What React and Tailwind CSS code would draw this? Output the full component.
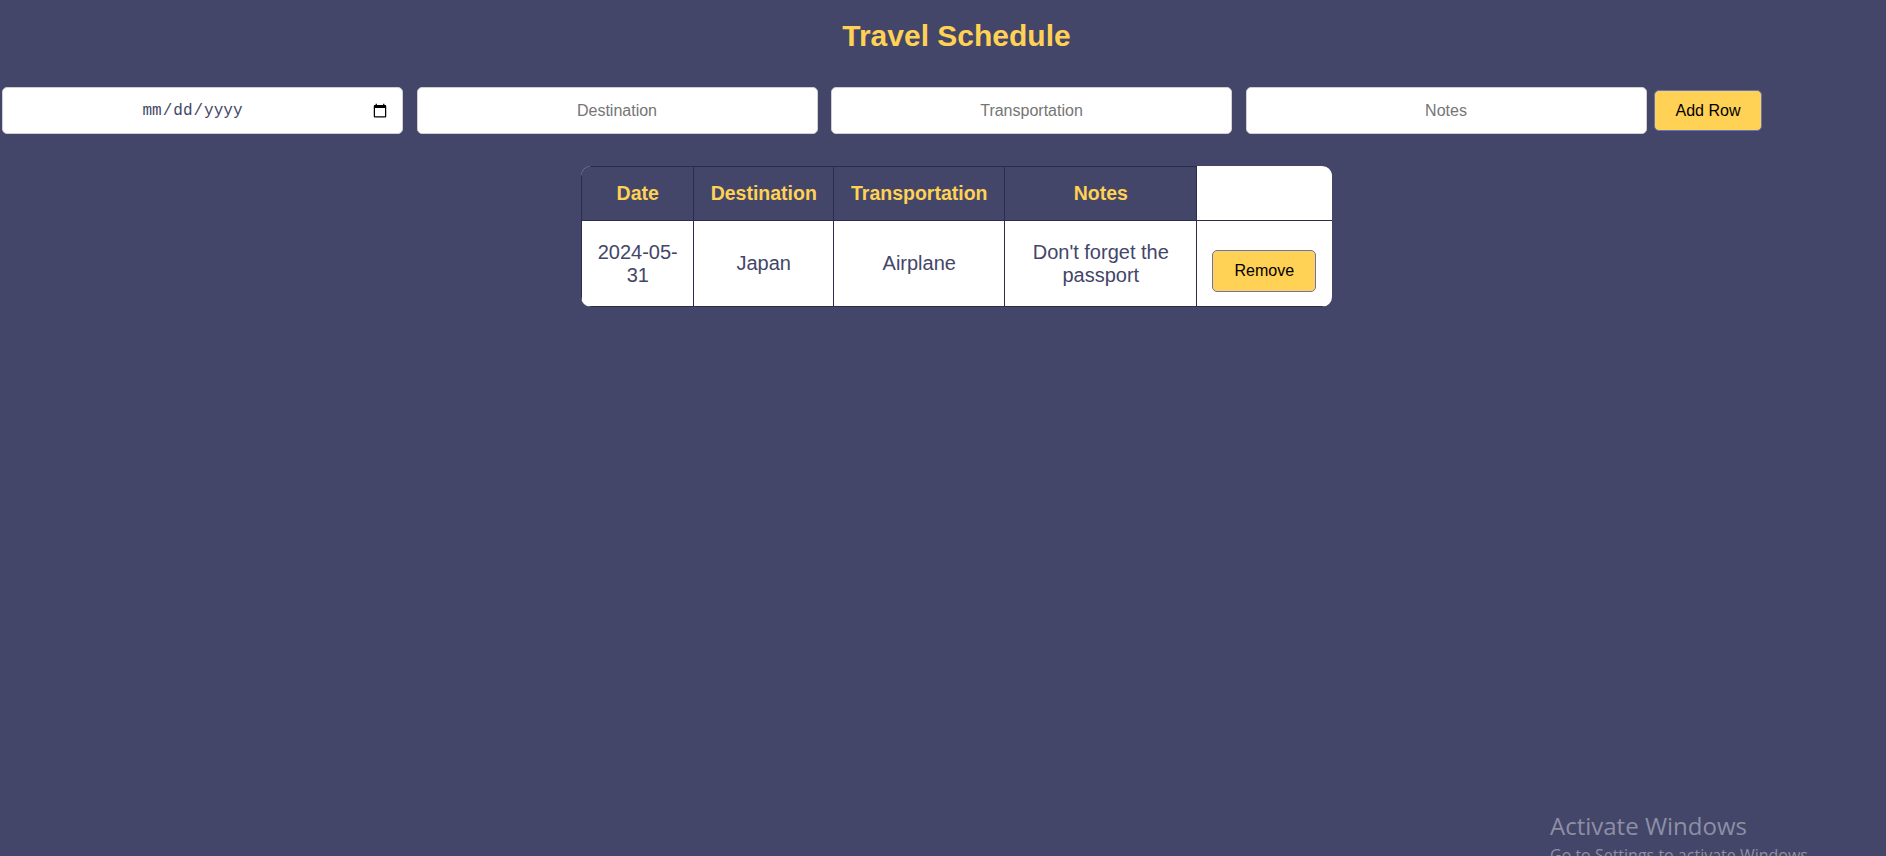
import React, { useState } from "react";

const initialRows = [
  { date: "2024-05-31", destination: "Japan", transportation: "Airplane", notes: "Don't forget the passport" },
];

const inputClass =
  "w-[401px] h-[47px] bg-white border border-[#cfcfd4] rounded-[5px] px-3 text-center text-[16px] text-[#434668] placeholder:text-[#757575] focus:outline-none";

const TravelSchedule = () => {
  const [rows, setRows] = useState(initialRows);
  const [form, setForm] = useState({ date: "", destination: "", transportation: "", notes: "" });

  const update = (key) => (e) => setForm({ ...form, [key]: e.target.value });

  const addRow = () => {
    setRows([...rows, form]);
    setForm({ date: "", destination: "", transportation: "", notes: "" });
  };

  const removeRow = (i) => setRows(rows.filter((_, idx) => idx !== i));

  return (
    <div className="relative min-h-screen bg-[#434668] font-['Liberation_Sans',Arial,sans-serif] overflow-hidden">
      <h1 className="pt-[21px] pl-[27px] text-center text-[30px] leading-[30px] font-bold text-[#ffd154]">
        Travel Schedule
      </h1>

      <div className="mt-[36px] flex items-center pl-[2px]">
        <div className="flex gap-[13.5px]">
          <input
            type="date"
            value={form.date}
            onChange={update("date")}
            className={
              inputClass +
              " font-['Liberation_Mono',monospace] [&::-webkit-datetime-edit]:flex-1 [&::-webkit-datetime-edit]:justify-center"
            }
          />
          <input type="text" placeholder="Destination" value={form.destination} onChange={update("destination")} className={inputClass} />
          <input type="text" placeholder="Transportation" value={form.transportation} onChange={update("transportation")} className={inputClass} />
          <input type="text" placeholder="Notes" value={form.notes} onChange={update("notes")} className={inputClass} />
        </div>
        <button
          onClick={addRow}
          className="ml-[7.5px] w-[108px] h-[41px] bg-[#ffd154] border border-[#6b72b5] rounded-[5px] text-[16px] text-black"
        >
          Add Row
        </button>
      </div>

      <div className="mt-[32px] pl-[27px] flex justify-center">
        <table className="bg-white rounded-[10px] overflow-hidden border-collapse table-fixed w-[750px]">
          <colgroup>
            <col className="w-[112px]" />
            <col className="w-[140px]" />
            <col className="w-[171px]" />
            <col className="w-[192px]" />
            <col className="w-[135px]" />
          </colgroup>
          <thead>
            <tr className="h-[54px]">
              {["Date", "Destination", "Transportation", "Notes"].map((h) => (
                <th
                  key={h}
                  className="bg-[#434668] border border-[#2b2d4e] px-[6px] text-[19.5px] font-bold text-[#ffd154] text-center"
                >
                  {h}
                </th>
              ))}
              <th className="bg-white border-b border-[#2b2d4e]"></th>
            </tr>
          </thead>
          <tbody>
            {rows.map((r, i) => (
              <tr key={i} className="h-[86px]">
                <td className="border border-[#2b2d4e] px-[15px] text-center text-[20px] leading-[23px] text-[#434668]">
                  {r.date.slice(0, 8)}
                  <wbr />
                  {r.date.slice(8)}
                </td>
                <td className="border border-[#2b2d4e] px-[15px] text-center text-[20px] leading-[23px] text-[#434668]">
                  {r.destination}
                </td>
                <td className="border border-[#2b2d4e] px-[15px] text-center text-[20px] leading-[23px] text-[#434668]">
                  {r.transportation}
                </td>
                <td className="border border-[#2b2d4e] px-[15px] text-center text-[20px] leading-[23px] text-[#434668]">
                  {r.notes}
                </td>
                <td className="border-l border-b border-[#2b2d4e] pl-[15px] align-middle">
                  <button
                    onClick={() => removeRow(i)}
                    className="mt-[14px] w-[104px] h-[42px] bg-[#ffd154] border border-[#6b72b5] rounded-[5px] text-[16px] text-black"
                  >
                    Remove
                  </button>
                </td>
              </tr>
            ))}
          </tbody>
        </table>
      </div>

      <div className="absolute left-[1550px] top-[811px] text-[#8d8fa6] font-['Open_Sans',sans-serif] leading-tight">
        <div className="text-[24px]">Activate Windows</div>
        <div className="text-[16px] mt-[4px]">Go to Settings to activate Windows.</div>
      </div>
    </div>
  );
};

export default function App() {
  return <TravelSchedule />;
}
